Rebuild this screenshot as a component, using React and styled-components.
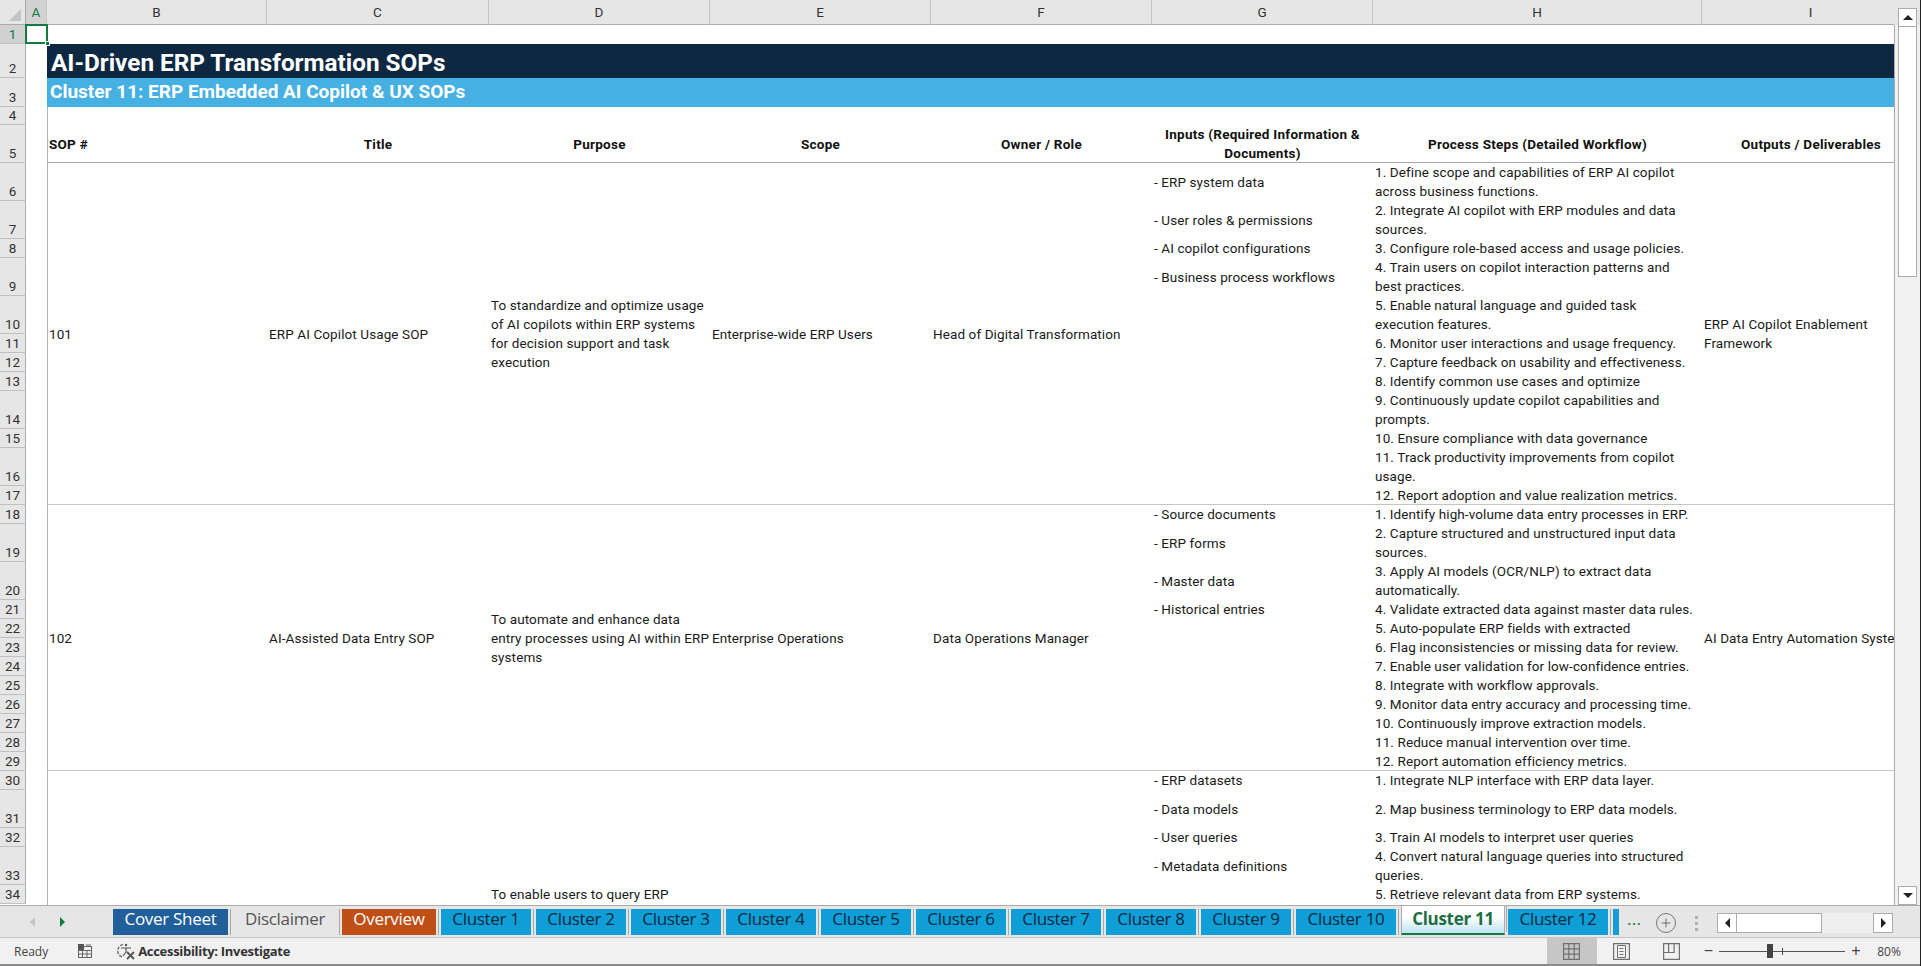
import React from "react";
import styled, { createGlobalStyle } from "styled-components";
import { Plus } from "lucide-react";

const GlobalStyle = createGlobalStyle`
	html, body { margin: 0; padding: 0; background: #fff; overflow: hidden; }
	#root { width: 1921px; height: 966px; }
`;

const CELL_FONT = `"Roboto", "Liberation Sans", sans-serif`;

const Window = styled.div`
	width: 1921px;
	height: 966px;
	display: flex;
	flex-direction: column;
	font-family: ${ CELL_FONT };
	overflow: hidden;
	border-right: 1px solid #222;
	box-sizing: border-box;
`;

const SheetArea = styled.div`
	flex: 0 0 906px;
	display: flex;
	overflow: hidden;
	border-bottom: 1px solid #ababab;
	box-sizing: border-box;
`;

const Grid = styled.div`
	flex: 1;
	min-width: 0;
	display: grid;
	grid-template-columns: 26px 21px 220px 222px 221px 221px 221px 221px 329px 218px;
	grid-auto-rows: 19px;
	overflow: hidden;
	align-content: start;
`;

const Corner = styled.div`
	grid-column: 1;
	grid-row: 1;
	background: #e6e6e6;
	border-bottom: 1px solid #ababab;
	border-right: 1px solid #ababab;
	position: relative;
	&::after {
		content: "";
		position: absolute;
		right: 4px;
		bottom: 3px;
		width: 0;
		height: 0;
		border-left: 12px solid transparent;
		border-bottom: 12px solid #c4c4c4;
	}
`;

const ColHead = styled.div`
	grid-column: ${ p => p.$col };
	grid-row: 1;
	background: ${ p => ( p.$active ? "#d2d2d2" : "#e6e6e6" ) };
	color: ${ p => ( p.$active ? "#107c41" : "#333" ) };
	border-bottom: 1px solid #ababab;
	border-right: 1px solid #c8c8c8;
	display: flex;
	align-items: center;
	justify-content: center;
	font-size: 13.5px;
	box-sizing: border-box;
`;

const RowHead = styled.div`
	grid-column: 1;
	grid-row: ${ p => p.$row };
	background: ${ p => ( p.$active ? "#d2d2d2" : "#e6e6e6" ) };
	color: ${ p => ( p.$active ? "#107c41" : "#333" ) };
	border-bottom: 1px solid #c0c0c0;
	border-right: 1px solid #ababab;
	display: flex;
	align-items: flex-end;
	justify-content: center;
	font-size: 13.5px;
	line-height: 18px;
	box-sizing: border-box;
`;

const SelectedCell = styled.div`
	grid-column: 2;
	grid-row: 2;
	border: 2px solid #107c41;
	margin: -1px -1px 0 -1px;
	position: relative;
	z-index: 2;
	&::after {
		content: "";
		position: absolute;
		right: -4px;
		bottom: -4px;
		width: 5px;
		height: 5px;
		background: #107c41;
		border: 1px solid #fff;
		box-sizing: border-box;
	}
`;

const TitleBand = styled.div`
	grid-column: 3 / -1;
	grid-row: 3;
	background: #0e2841;
	color: #fff;
	font-size: 24.3px;
	font-weight: 700;
	line-height: 37px;
	padding-left: 4px;
	white-space: nowrap;
	overflow: hidden;
`;

const SubBand = styled.div`
	grid-column: 3 / -1;
	grid-row: 4;
	background: #45b0e1;
	color: #fff;
	font-size: 19px;
	font-weight: 700;
	line-height: 28px;
	padding-left: 3px;
	white-space: nowrap;
	overflow: hidden;
`;

const RuleLine = styled.div`
	grid-column: 3 / -1;
	grid-row: ${ p => p.$row };
	align-self: end;
	height: 1px;
	background: ${ p => p.$color || "#c4c4c4" };
`;

const ColumnRule = styled.div`
	grid-column: 3;
	grid-row: 5 / 44;
	width: 1px;
	background: #b4b4b4;
`;

const HeaderCell = styled.div`
	grid-column: ${ p => p.$col };
	grid-row: 6;
	font-size: 13.5px;
	font-weight: 700;
	line-height: 19px;
	color: #111;
	display: flex;
	align-items: center;
	justify-content: ${ p => ( p.$left ? "flex-start" : "center" ) };
	text-align: ${ p => ( p.$left ? "left" : "center" ) };
	padding: 0 2px;
	box-sizing: border-box;
	overflow: hidden;
	letter-spacing: 0.25px;
	& > div { white-space: pre; }
`;

const Cell = styled.div`
	grid-column: ${ p => p.$col };
	grid-row: ${ p => p.$row };
	font-size: 13.5px;
	line-height: 19px;
	letter-spacing: 0.1px;
	color: #1a1a1a;
	display: flex;
	align-items: center;
	padding: 0 2px;
	overflow: hidden;
	min-width: 0;
	& > div { white-space: pre; }
`;

const Lines = ( { text } ) => <div>{ text }</div>;

const BottomBar = styled.div`
	flex: 0 0 32px;
	background: #e6e6e6;
	display: flex;
	align-items: stretch;
	border-bottom: 1px solid #c6c6c6;
	box-sizing: border-box;
	position: relative;
`;

const SheetNav = styled.div`
	flex: 0 0 113px;
	display: flex;
	align-items: center;
	gap: 25px;
	padding-left: 30px;
	box-sizing: border-box;
`;

const NavArrow = styled.span`
	width: 0;
	height: 0;
	border-top: 5px solid transparent;
	border-bottom: 5px solid transparent;
	${ p => ( p.$left ? `border-right: 5px solid ${ p.$color };` : `border-left: 5px solid ${ p.$color };` ) }
`;

const TabStrip = styled.div`
	display: flex;
	align-items: flex-start;
	padding-top: 3px;
	width: 1506px;
	overflow: hidden;
	flex: 0 0 auto;
`;

const Tab = styled.div`
	flex: 0 0 ${ p => p.$w }px;
	height: 26px;
	margin-right: 5px;
	background: ${ p => p.$bg };
	color: ${ p => p.$fg };
	font-size: 17px;
	line-height: 20px;
	font-family: "Open Sans", "Noto Sans", sans-serif;
	text-align: center;
	box-sizing: border-box;
	position: relative;
	white-space: nowrap;
	letter-spacing: -0.3px;
	&::after {
		content: "";
		position: absolute;
		right: -3px;
		top: 0;
		height: 26px;
		width: 1px;
		background: #a8a8a8;
	}
`;

const ActiveTab = styled( Tab )`
	background: linear-gradient(#ffffff 40%, #bfe3f2);
	color: #1f6e43;
	font-weight: 700;
	border-bottom: 2px solid #107c41;
	height: 29px;
	margin-top: -3px;
	padding-top: 3px;
	margin-right: 3px;
	border-left: 1px solid #ababab;
	border-right: 1px solid #ababab;
`;

const MoreDots = styled.div`
	position: absolute;
	left: 1627px;
	top: 2px;
	font-size: 18px;
	color: #107c41;
`;

const AddSheet = styled.div`
	position: absolute;
	left: 1656px;
	top: 7px;
	width: 20px;
	height: 20px;
	border: 1.5px solid #777;
	border-radius: 50%;
	display: flex;
	align-items: center;
	justify-content: center;
	box-sizing: border-box;
	color: #666;
`;

const GripDots = styled.div`
	position: absolute;
	left: 1695px;
	top: 10px;
	display: flex;
	flex-direction: column;
	gap: 3px;
	& > i {
		width: 3px;
		height: 3px;
		background: #b0b0b0;
		display: block;
	}
`;

const HScroll = styled.div`
	position: absolute;
	left: 1717px;
	top: 7px;
	width: 176px;
	height: 20px;
	display: flex;
	background: #efefef;
`;

const ScrollBtn = styled.div`
	flex: 0 0 20px;
	background: #fff;
	border: 1px solid #ababab;
	box-sizing: border-box;
	display: flex;
	align-items: center;
	justify-content: center;
`;

const HThumb = styled.div`
	flex: 0 0 85px;
	background: #fff;
	border: 1px solid #ababab;
	border-left: 0;
	box-sizing: border-box;
`;

const Spacer = styled.div`
	flex: 1;
`;

const Triangle = styled.span`
	width: 0;
	height: 0;
	${ p => {
		const side = "5px solid transparent";
		if ( p.$dir === "left" ) return `border-top:${ side };border-bottom:${ side };border-right:5px solid #222;`;
		if ( p.$dir === "right" ) return `border-top:${ side };border-bottom:${ side };border-left:5px solid #222;`;
		if ( p.$dir === "up" ) return `border-left:${ side };border-right:${ side };border-bottom:5px solid #222;`;
		return `border-left:${ side };border-right:${ side };border-top:5px solid #222;`;
	} }
`;

const StatusBar = styled.div`
	flex: 0 0 28px;
	background: #f1f1f1;
	border-bottom: 2px solid #8c8c8c;
	box-sizing: border-box;
	display: flex;
	align-items: center;
	font-size: 13px;
	color: #444;
	position: relative;
`;

const Ready = styled.span`
	margin-left: 14px;
	font-family: "Open Sans", sans-serif;
	font-size: 12px;
`;

const StatusIcon = styled.svg`
	flex: none;
	display: block;
	margin-left: ${ p => p.$gap }px;
`;

const Accessibility = styled.span`
	font-family: "Open Sans", sans-serif;
	font-weight: 700;
	font-size: 13px;
	letter-spacing: -0.3px;
	color: #333;
	margin-left: 2px;
`;

const ViewButton = styled.div`
	flex: 0 0 50px;
	height: 100%;
	display: flex;
	align-items: center;
	justify-content: center;
	background: ${ p => ( p.$active ? "#c6c6c6" : "transparent" ) };
`;

const ZoomSlider = styled.div`
	position: relative;
	flex: 0 0 126px;
	height: 1px;
	background: #555;
	margin: 0 6px;
	& > b {
		position: absolute;
		left: 48px;
		top: -7px;
		width: 6px;
		height: 14px;
		background: #444;
	}
	& > i {
		position: absolute;
		left: 63px;
		top: -3px;
		width: 1px;
		height: 7px;
		background: #444;
	}
`;

const ZoomSign = styled.span`
	flex: 0 0 ${ p => p.$w }px;
	margin-left: ${ p => p.$gap || 0 }px;
	font-size: 16px;
	color: #444;
	font-family: "Liberation Sans", sans-serif;
	line-height: 1;
	text-align: center;
`;

const ZoomValue = styled.span`
	flex: 0 0 56px;
	font-family: "Open Sans", sans-serif;
	font-size: 12px;
	color: #444;
	text-align: center;
	margin-right: 3px;
`;

const VScroll = styled.div`
	flex: 0 0 26px;
	background: linear-gradient(#e6e6e6 25px, #f1f1f1 25px);
	box-sizing: border-box;
	display: flex;
	flex-direction: column;
	padding: 8px 0 0 4px;
	position: relative;
	&::before {
		content: "";
		position: absolute;
		left: 0;
		top: 25px;
		bottom: 0;
		width: 1px;
		background: #ababab;
	}
`;

const VBtn = styled.div`
	flex: 0 0 19px;
	width: 19px;
	background: #fff;
	border: 1px solid #ababab;
	box-sizing: border-box;
	display: flex;
	align-items: center;
	justify-content: center;
`;

const VThumb = styled.div`
	flex: 0 0 250px;
	width: 19px;
	background: #fff;
	border: 1px solid #ababab;
	border-top: 0;
	box-sizing: border-box;
`;

const COLS = [ "A", "B", "C", "D", "E", "F", "G", "H", "I" ];

// rows that are two lines high
const TALL_ROWS = [ 5, 6, 7, 9, 10, 14, 16, 19, 20, 31, 33 ];

const ROW_LABELS = Array.from( { length: 34 }, ( _, i ) => i + 1 );

// rows 1 to 4 are the title area, they have their own heights
const TOP_ROWS = { 1: 19, 2: 34, 3: 29, 4: 18 };

const rowTemplate = () => {
	const sizes = [ "25px" ];
	ROW_LABELS.forEach( n => {
		sizes.push( `${ TOP_ROWS[ n ] || ( TALL_ROWS.includes( n ) ? 38 : 19 ) }px` );
	} );
	return sizes.join( " " );
};

const G_CELLS = [
	[ 6, "- ERP system data" ], [ 7, "- User roles & permissions" ], [ 8, "- AI copilot configurations" ], [ 9, "- Business process workflows" ],
	[ 18, "- Source documents" ], [ 19, "- ERP forms" ], [ 20, "- Master data" ], [ 21, "- Historical entries" ],
	[ 30, "- ERP datasets" ], [ 31, "- Data models" ], [ 32, "- User queries" ], [ 33, "- Metadata definitions" ],
];

const H_CELLS = [
	[ 6, "1. Define scope and capabilities of ERP AI copilot\nacross business functions." ],
	[ 7, "2. Integrate AI copilot with ERP modules and data\nsources." ],
	[ 8, "3. Configure role-based access and usage policies." ],
	[ 9, "4. Train users on copilot interaction patterns and\nbest practices." ],
	[ 10, "5. Enable natural language and guided task\nexecution features." ],
	[ 11, "6. Monitor user interactions and usage frequency." ],
	[ 12, "7. Capture feedback on usability and effectiveness." ],
	[ 13, "8. Identify common use cases and optimize" ],
	[ 14, "9. Continuously update copilot capabilities and\nprompts." ],
	[ 15, "10. Ensure compliance with data governance" ],
	[ 16, "11. Track productivity improvements from copilot\nusage." ],
	[ 17, "12. Report adoption and value realization metrics." ],
	[ 18, "1. Identify high-volume data entry processes in ERP." ],
	[ 19, "2. Capture structured and unstructured input data\nsources." ],
	[ 20, "3. Apply AI models (OCR/NLP) to extract data\nautomatically." ],
	[ 21, "4. Validate extracted data against master data rules." ],
	[ 22, "5. Auto-populate ERP fields with extracted" ],
	[ 23, "6. Flag inconsistencies or missing data for review." ],
	[ 24, "7. Enable user validation for low-confidence entries." ],
	[ 25, "8. Integrate with workflow approvals." ],
	[ 26, "9. Monitor data entry accuracy and processing time." ],
	[ 27, "10. Continuously improve extraction models." ],
	[ 28, "11. Reduce manual intervention over time." ],
	[ 29, "12. Report automation efficiency metrics." ],
	[ 30, "1. Integrate NLP interface with ERP data layer." ],
	[ 31, "2. Map business terminology to ERP data models." ],
	[ 32, "3. Train AI models to interpret user queries" ],
	[ 33, "4. Convert natural language queries into structured\nqueries." ],
	[ 34, "5. Retrieve relevant data from ERP systems." ],
];

const MERGED = [
	{
		firstRow: 6,
		cells: [ "101", "ERP AI Copilot Usage SOP", "To standardize and optimize usage\nof AI copilots within ERP systems\nfor decision support and task\nexecution", "Enterprise-wide ERP Users", "Head of Digital Transformation" ],
		output: "ERP AI Copilot Enablement\nFramework",
	},
	{
		firstRow: 18,
		cells: [ "102", "AI-Assisted Data Entry SOP", "To automate and enhance data\nentry processes using AI within ERP\nsystems", "Enterprise Operations", "Data Operations Manager" ],
		output: "AI Data Entry Automation System",
	},
];

const HEADERS = [
	[ "SOP #", 3, true ], [ "Title", 4 ], [ "Purpose", 5 ], [ "Scope", 6 ], [ "Owner / Role", 7 ],
	[ "Inputs (Required Information &\nDocuments)", 8 ], [ "Process Steps (Detailed Workflow)", 9 ], [ "Outputs / Deliverables", 10 ],
];

const TABS = [
	[ "Cover Sheet", 115, "#215f9a", "#fff" ],
	[ "Disclaimer", 104, "transparent", "#555" ],
	[ "Overview", 94, "#c04f15", "#fff" ],
	...Array.from( { length: 9 }, ( _, i ) => [ `Cluster ${ i + 1 }`, 90, "#0f9ed5", "#0e2841" ] ),
	[ "Cluster 10", 100, "#0f9ed5", "#0e2841" ],
];

const gridRow = n => n + 1;

const App = () => (
	<Window>
		<GlobalStyle />
		<SheetArea>
			<Grid style={ { gridTemplateRows: rowTemplate() } }>
				<Corner />
				{ COLS.map( ( name, i ) => <ColHead key={ name } $col={ i + 2 } $active={ name === "A" }>{ name }</ColHead> ) }
				{ ROW_LABELS.map( n => <RowHead key={ n } $row={ gridRow( n ) } $active={ n === 1 }>{ n }</RowHead> ) }
				<SelectedCell />
				<TitleBand>AI-Driven ERP Transformation SOPs</TitleBand>
				<SubBand>Cluster 11: ERP Embedded AI Copilot &amp; UX SOPs</SubBand>
				<ColumnRule />
				<RuleLine $row={ gridRow( 5 ) } $color="#a6a6a6" />
				<RuleLine $row={ gridRow( 17 ) } />
				<RuleLine $row={ gridRow( 29 ) } />
				{ HEADERS.map( ( [ text, col, left ] ) => <HeaderCell key={ col } $col={ col } $left={ left }><Lines text={ text } /></HeaderCell> ) }
				{ MERGED.map( group => group.cells.map( ( text, i ) => (
					<Cell key={ text } $col={ i + 3 } $row={ `${ gridRow( group.firstRow ) } / span 12` }>
						<Lines text={ text } />
					</Cell>
				) ) ) }
				{ MERGED.map( group => (
					<Cell key={ group.output } $col={ 10 } $row={ `${ gridRow( group.firstRow ) } / span 12` }>
						<Lines text={ group.output } />
					</Cell>
				) ) }
				{ G_CELLS.map( ( [ row, text ] ) => <Cell key={ row } $col={ 8 } $row={ gridRow( row ) }><Lines text={ text } /></Cell> ) }
				{ H_CELLS.map( ( [ row, text ] ) => <Cell key={ row } $col={ 9 } $row={ gridRow( row ) }><Lines text={ text } /></Cell> ) }
				<Cell $col={ 5 } $row={ gridRow( 34 ) }><Lines text="To enable users to query ERP" /></Cell>
			</Grid>
			<VScroll>
				<VBtn><Triangle $dir="up" /></VBtn>
				<VThumb />
				<Spacer />
				<VBtn><Triangle $dir="down" /></VBtn>
			</VScroll>
		</SheetArea>
		<BottomBar>
			<SheetNav>
				<NavArrow $left $color="#c4c4c4" />
				<NavArrow $color="#107c41" />
			</SheetNav>
			<TabStrip>
				{ TABS.map( ( [ label, w, bg, fg ] ) => <Tab key={ label } $w={ w } $bg={ bg } $fg={ fg }>{ label }</Tab> ) }
				<ActiveTab $w={ 104 } $bg="#fff" $fg="#107c41">Cluster 11</ActiveTab>
				<Tab $w={ 100 } $bg="#0f9ed5" $fg="#0e2841">Cluster 12</Tab>
				<Tab $w={ 6 } $bg="#0f9ed5" $fg="#0e2841" />
			</TabStrip>
			<MoreDots>...</MoreDots>
			<AddSheet><Plus size={ 14 } strokeWidth={ 1.6 } /></AddSheet>
			<GripDots><i /><i /><i /></GripDots>
			<HScroll>
				<ScrollBtn><Triangle $dir="left" /></ScrollBtn>
				<HThumb />
				<Spacer />
				<ScrollBtn><Triangle $dir="right" /></ScrollBtn>
			</HScroll>
		</BottomBar>
		<StatusBar>
			<Ready>Ready</Ready>
			<StatusIcon $gap={ 29 } width="16" height="16" viewBox="0 0 16 16" fill="none" stroke="#666">
				<rect x="1.5" y="3.5" width="13" height="11" />
				<path d="M1.5 7.5h13M5.5 7.5v7M10 7.5v7M1.5 11h13" />
				<rect x="1" y="1" width="6" height="6" fill="#555" stroke="none" />
				<path d="M9 2h5" />
			</StatusIcon>
			<StatusIcon $gap={ 23 } width="20" height="18" viewBox="0 0 20 18" fill="none" stroke="#555" strokeWidth="1.2">
				<path d="M7 2.5a6.5 6.5 0 0 0 -1 12.5" strokeDasharray="3 1.5" />
				<circle cx="10" cy="3" r="1.2" fill="#555" stroke="none" />
				<path d="M5 6h10M10 6v4M10 10l-3 4" />
				<path d="M11 10l7 7M18 10l-7 7" strokeWidth="1.8" />
			</StatusIcon>
			<Accessibility>Accessibility: Investigate</Accessibility>
			<Spacer />
			<ViewButton $active>
				<svg width="17" height="17" viewBox="0 0 17 17" fill="none" stroke="#707070" strokeWidth="1.2">
					<path d="M.6.6h15.8v15.8H.6zM5.8.6v15.8M11.2.6v15.8M.6 5.8h15.8M.6 11.2h15.8" />
				</svg>
			</ViewButton>
			<ViewButton>
				<svg width="17" height="17" viewBox="0 0 17 17" fill="none" stroke="#707070" strokeWidth="1.2">
					<path d="M.6.6h15.8v15.8H.6z" />
					<path d="M4.5 2.5h8v12h-8zM6.5 5.5h4M6.5 8.5h4M6.5 11.5h4" strokeWidth="1" />
				</svg>
			</ViewButton>
			<ViewButton>
				<svg width="17" height="17" viewBox="0 0 17 17" fill="none" stroke="#707070" strokeWidth="1.2">
					<path d="M.6.6h15.8v15.8H.6zM.6 9.5h10.5V.6M5.6.6v8.9" />
				</svg>
			</ViewButton>
			<ZoomSign $w={ 9 } $gap={ 7 }>−</ZoomSign>
			<ZoomSlider><b /><i /></ZoomSlider>
			<ZoomSign $w={ 10 }>+</ZoomSign>
			<ZoomValue>80%</ZoomValue>
		</StatusBar>
	</Window>
);

export default App;
